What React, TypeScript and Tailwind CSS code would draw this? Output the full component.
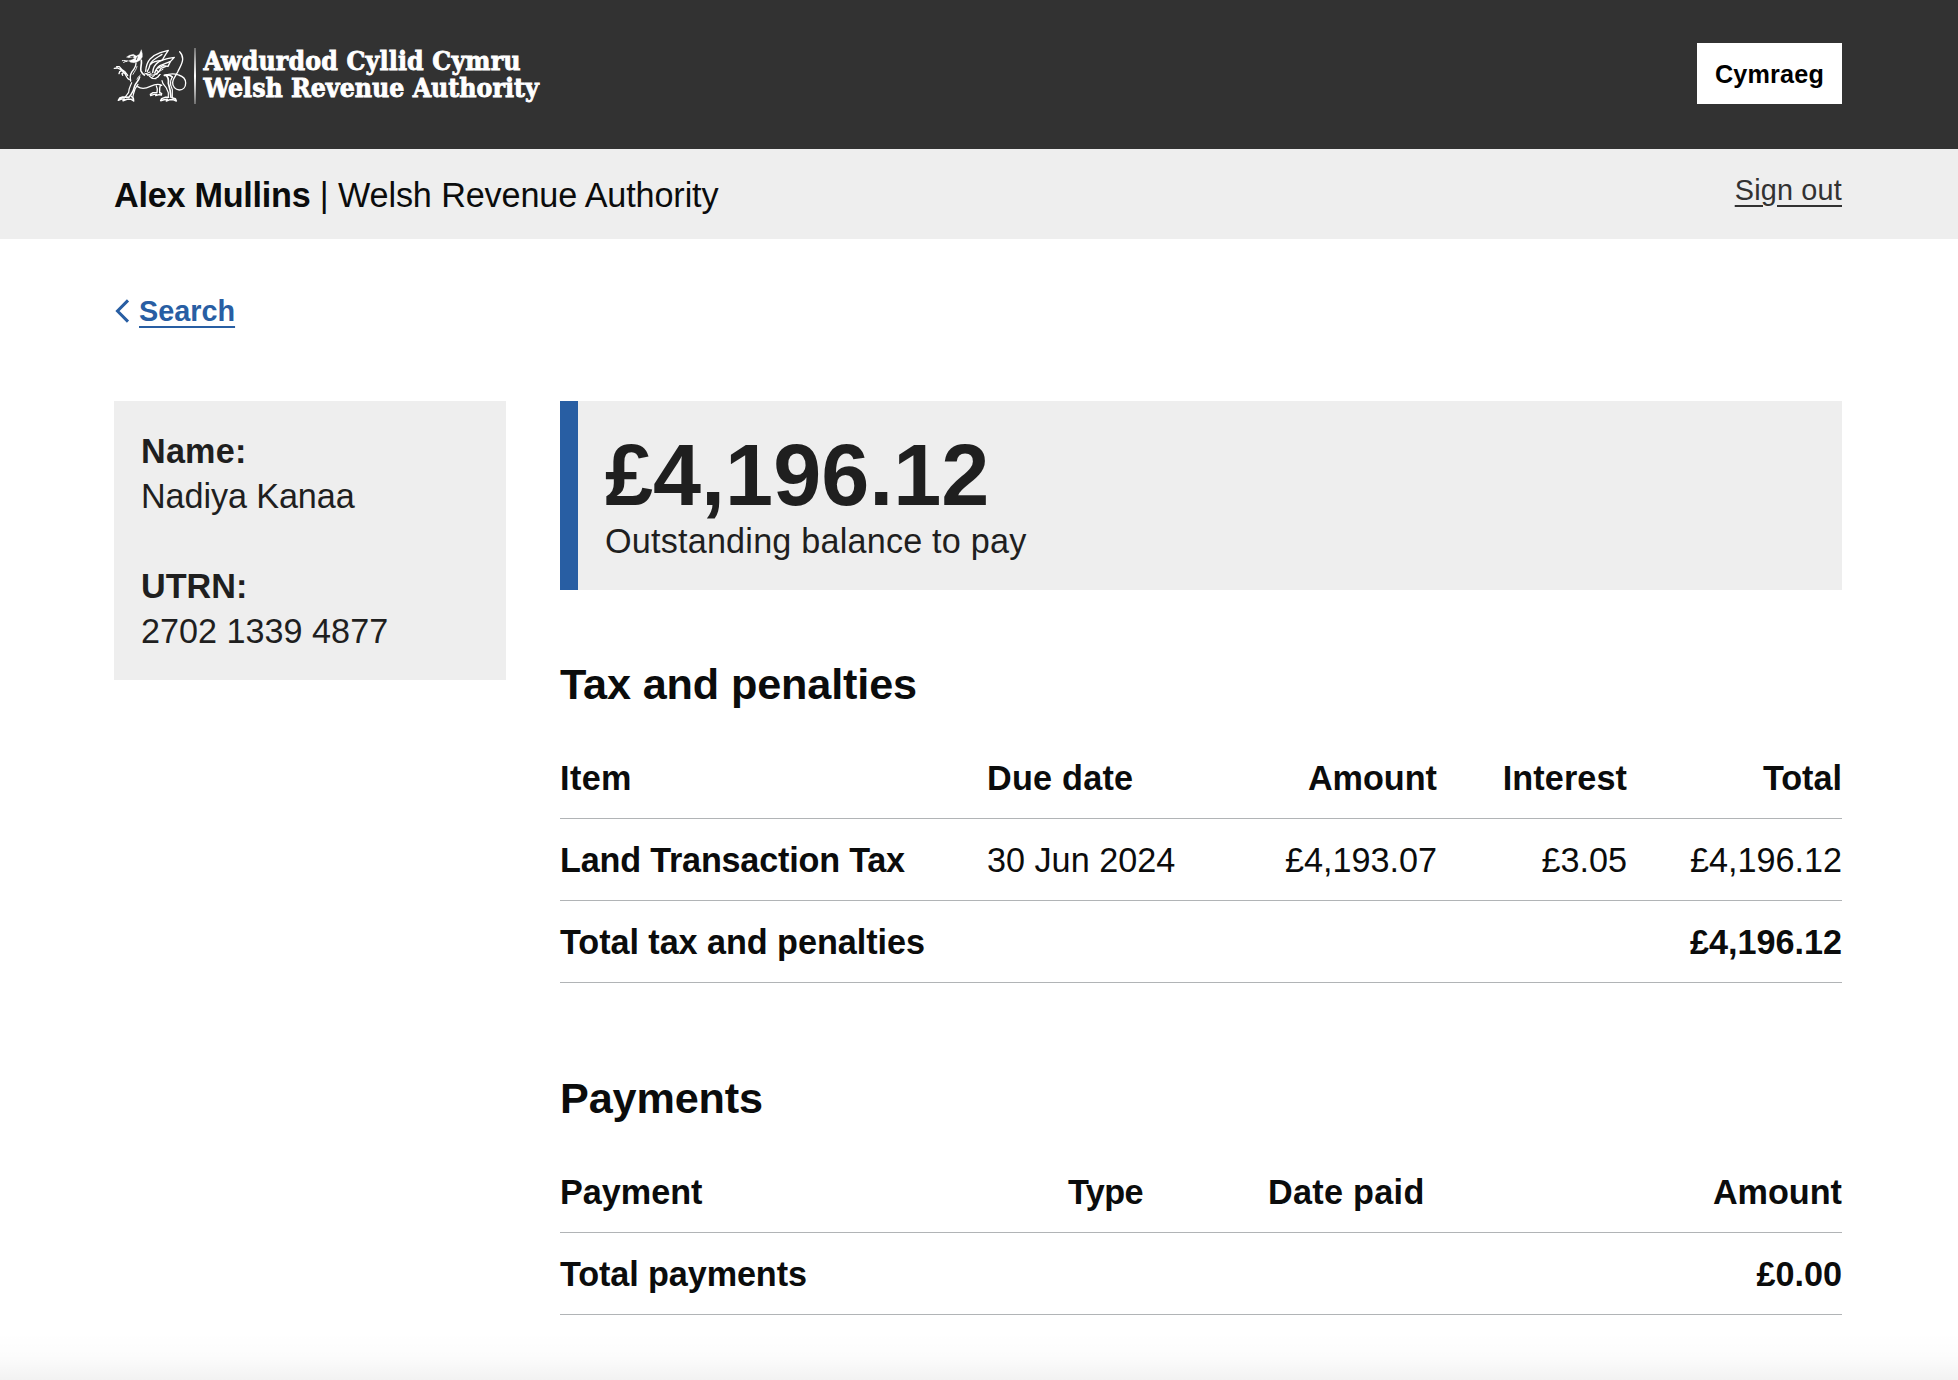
import type { ReactNode } from "react";

function Dragon() {
  return (
    <svg
      className="h-[80px] w-[100px] shrink-0"
      viewBox="0 0 300 240"
      fill="none"
      stroke="#fff"
      strokeLinecap="round"
      strokeLinejoin="round"
      aria-hidden="true"
    >
      {/* head and jaw */}
      <path d="M80 66l8-5 12-3 9 5 9-5 6-14 3 12 0 10-6 9-10 6-9 2-10-1-6-5 10-3 8-4-6-4-12 2z" fill="#fff" strokeWidth="1" />
      <path d="M92 65l8-1M112 66l-3 8" stroke="#323232" strokeWidth="2.5" />
      <path d="M84 78c-6-1-11-2-17-1M80 79c-3 0-6 1-9 3" strokeWidth="3" />
      {/* neck and chest */}
      <path d="M108 84c0 10-5 18-12 26-5 8-7 16-4 28" strokeWidth="4" />
      <path d="M124 76c2 11-4 22-1 32 2 5 5 9 10 12" strokeWidth="5" />
      <path d="M111 94c-1 9-8 16-12 24M121 120c-4 3-8 7-10 13" strokeWidth="2.5" />
      {/* raised front claw */}
      <path d="M88 134c-7-3-9-11-13-18l-11-11M83 121c-4-6-7-12-15-16" strokeWidth="4" />
      <path d="M66 104l-8-9-8 0M63 104l-11-5-9 1M65 107l-6 3-2 6M71 113l-5 3 2 5" strokeWidth="4" />
      {/* front leg */}
      <path d="M119 126c-3 13-12 17-15 27-2 9-4 17-10 24l-8 11" strokeWidth="4.5" />
      <path d="M95 143c-4 10-9 17-9 29l-11 15M114 148c-8 9-12 19-14 31l-2 10" strokeWidth="3.5" />
      <path d="M86 187l-18-1-9 3-4 7 9-4 9 0-4 5 12-4 13 0 7 5-1-8-6-6" strokeWidth="4.5" />
      {/* belly and back */}
      <path d="M113 155c10 7 26 5 38-1 13-6 23-9 34-3" strokeWidth="4" />
      <path d="M134 115c9 6 20 7 30 4" strokeWidth="3" />
      {/* wings */}
      <path d="M137 109c1-17 5-28 14-38 9-9 19-14 30-18l24-7-8 12-10 17" strokeWidth="4" />
      <path d="M142 109c5-7 7-15 9-23 5-11 20-18 35-28M152 88c6-8 18-11 34-12" strokeWidth="4" />
      <path d="M158 113c1-14 6-25 19-33 13-8 31-10 46-13l-12 13-7 14-15-2-13 7" strokeWidth="4" />
      <path d="M164 114c4-11 8-17 16-22l30-12M168 104l8 7 7-11 15-6M176 111l-10 7" strokeWidth="4" />
      <path d="M138 116l12-5M143 121l10-5M156 127l7-6M164 131l8-4 7-8M148 123l8 7 12 1" strokeWidth="3.5" />
      <path d="M170 119c4-9 12-12 19-16M181 118l-8 10" strokeWidth="3" />
      {/* rear legs */}
      <path d="M193 121c11-3 19 0 24 5M199 122c7 6 7 14 6 23l5 19 3 23" strokeWidth="5" />
      <path d="M186 137c1 10 8 15 13 22l6 14 0 13M217 126c-5 7-6 15-5 24l5 14 0 24" strokeWidth="3.5" />
      <path d="M206 187l-11 0-10 4-3 6 10-3 10-1-3 5 11-4 9 0 10 4-3-7-10-3" strokeWidth="4.5" />
      <path d="M169 153c4 7 4 13 2 20M181 151c-3 8-2 15-2 23M171 173l-12 0-8 5 1 4 10-4 8 0-3 4 10-3 7 1 1-4-5-3" strokeWidth="4" />
      {/* tail */}
      <path d="M194 121c14-5 29-6 42-1 13 4 21 13 21 24 0 13-8 21-19 21-12-1-21-10-20-23 1-13 10-20 15-31 5-12 15-25 15-39 0-9-3-16-9-22" strokeWidth="4" />
    </svg>
  );
}

function Logo() {
  return (
    <a className="flex items-start" aria-label="Awdurdod Cyllid Cymru, Welsh Revenue Authority">
      <div className="-ml-[14px] flex">
        <Dragon />
      </div>
      <div className="-ml-[6px] mt-[13px] h-[56px] w-[1.5px] bg-linear-to-b from-white/30 via-white to-white/30" />
      <div className="mt-[12px] ml-[8px] font-['DejaVu_Serif_Condensed','DejaVu_Serif',serif] text-[26.4px] leading-[27px] font-bold whitespace-nowrap text-white [-webkit-text-stroke:0.8px_#fff]">
        <p className="tracking-[0.17px]">Awdurdod Cyllid Cymru</p>
        <p>Welsh Revenue Authority</p>
      </div>
    </a>
  );
}

function Cell({ children, right, bold }: { children?: ReactNode; right?: boolean; bold?: boolean }) {
  return (
    <td
      className={`h-[82px] border-b border-[#b1b4b6] px-0 pt-[2px] pb-0 align-middle whitespace-nowrap ${right ? "text-right" : "text-left"} ${bold ? "font-bold" : ""}`}
    >
      {children}
    </td>
  );
}

function Heading({ children }: { children: ReactNode }) {
  return <h2 className="text-[43.2px] leading-[54px] font-bold tracking-[-0.13px]">{children}</h2>;
}

export default function App() {
  return (
    <div className="relative h-[1380px] w-[1958px] overflow-hidden bg-white font-['Liberation_Sans',Arial,sans-serif] text-[34.2px] leading-[45px] text-[#0b0c0c]">
      <header className="flex h-[149px] items-start justify-between bg-[#323232] pr-[116px] pl-[114px]">
        <div className="pt-[35px]">
          <Logo />
        </div>
        <button className="mt-[43px] h-[61px] w-[145px] bg-white pt-[2px] text-[25.2px] leading-[59px] font-bold tracking-[0.2px] text-black">
          Cymraeg
        </button>
      </header>

      <div className="flex h-[90px] items-start justify-between bg-[#eeeeee] pt-[23px] pr-[116px] pl-[114px]">
        <p className="mt-px">
          <strong className="tracking-[-0.25px]">Alex Mullins</strong>
          <span className="tracking-[-0.12px]"> | Welsh Revenue Authority</span>
        </p>
        <a className="text-[28.8px] leading-[36px] tracking-[0.2px] text-[#323232] underline decoration-2 underline-offset-[5px]">
          Sign out
        </a>
      </div>

      <main className="pt-[54px] pr-[116px] pl-[114px]">
        <a className="flex h-[36px] items-center text-[28.8px] leading-[36px] font-bold text-[#285ea3]">
          <svg className="mr-[9px] h-[26px] w-[16px]" viewBox="0 0 16 26" fill="none" stroke="#285ea3" strokeWidth="3">
            <path d="M14 2.4L3.5 13L14 23.6" />
          </svg>
          <span className="underline decoration-2 underline-offset-[5px]">Search</span>
        </a>

        <div className="mt-[72px] flex items-start gap-[54px]">
          <aside className="w-[392px] bg-[#eeeeee] px-[27px] pt-[28px] pb-[26px] text-[#1f1f1f]">
            <h3 className="font-bold tracking-[0.2px]">Name:</h3>
            <p className="tracking-[-0.1px]">Nadiya Kanaa</p>
            <h3 className="mt-[45px] font-bold">UTRN:</h3>
            <p>2702 1339 4877</p>
          </aside>

          <div className="w-[1282px]">
            <section className="border-l-[18px] border-[#285ea3] bg-[#eeeeee] px-[27px] pt-[27px] pb-[26px] text-[#1f1f1f]">
              <p className="-mb-[3px] text-[86.4px] leading-[94px] font-bold">£4,196.12</p>
              <p className="tracking-[0.2px]">Outstanding balance to pay</p>
            </section>

            <section className="mt-[67px]">
              <Heading>Tax and penalties</Heading>
              <table className="mt-[26px] w-full table-fixed border-separate border-spacing-0">
                <colgroup>
                  <col className="w-[427px]" />
                  <col className="w-[213px]" />
                  <col className="w-[237px]" />
                  <col className="w-[190px]" />
                  <col className="w-[215px]" />
                </colgroup>
                <tbody>
                  <tr>
                    <Cell bold><span className="tracking-[0.4px]">Item</span></Cell>
                    <Cell bold><span className="tracking-[0.25px]">Due date</span></Cell>
                    <Cell bold right>Amount</Cell>
                    <Cell bold right><span className="tracking-[0.1px]">Interest</span></Cell>
                    <Cell bold right>Total</Cell>
                  </tr>
                  <tr>
                    <Cell bold><span className="tracking-[-0.2px]">Land Transaction Tax</span></Cell>
                    <Cell>30 Jun 2024</Cell>
                    <Cell right>£4,193.07</Cell>
                    <Cell right>£3.05</Cell>
                    <Cell right>£4,196.12</Cell>
                  </tr>
                  <tr>
                    <Cell bold><span className="tracking-[-0.05px]">Total tax and penalties</span></Cell>
                    <Cell />
                    <Cell />
                    <Cell />
                    <Cell bold right>£4,196.12</Cell>
                  </tr>
                </tbody>
              </table>
            </section>

            <section className="mt-[88px]">
              <Heading>Payments</Heading>
              <table className="mt-[26px] w-full table-fixed border-separate border-spacing-0">
                <colgroup>
                  <col className="w-[508px]" />
                  <col className="w-[200px]" />
                  <col className="w-[286px]" />
                  <col className="w-[288px]" />
                </colgroup>
                <tbody>
                  <tr>
                    <Cell bold>Payment</Cell>
                    <Cell bold><span className="tracking-[-0.6px]">Type</span></Cell>
                    <Cell bold><span className="tracking-[0.3px]">Date paid</span></Cell>
                    <Cell bold right>Amount</Cell>
                  </tr>
                  <tr>
                    <Cell bold><span className="tracking-[-0.1px]">Total payments</span></Cell>
                    <Cell />
                    <Cell />
                    <Cell bold right>£0.00</Cell>
                  </tr>
                </tbody>
              </table>
            </section>
          </div>
        </div>
      </main>

      <div className="pointer-events-none absolute inset-x-0 bottom-0 h-[48px] bg-linear-to-b from-black/0 via-black/[0.012] to-black/[0.05]" />
    </div>
  );
}
